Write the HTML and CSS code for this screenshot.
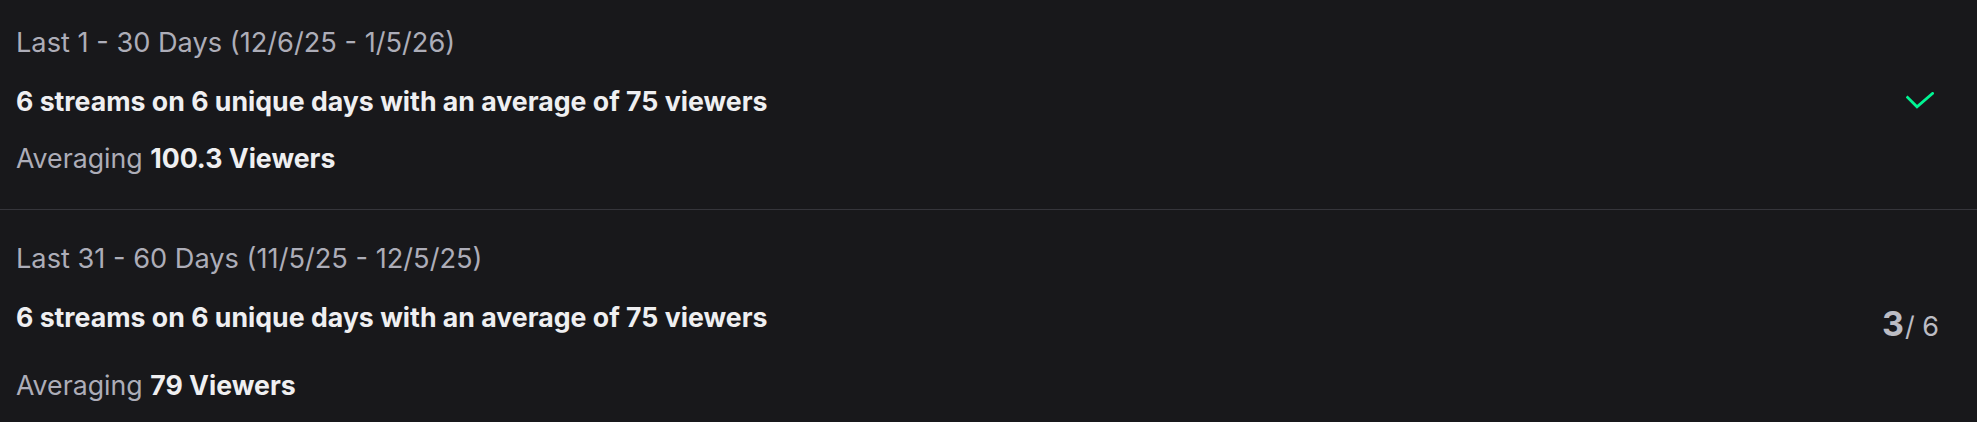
FILE: index.html
```html
<!DOCTYPE html>
<html lang="en">
<head>
<meta charset="utf-8">
<title>Stream goals</title>
<link rel="stylesheet" href="styles.css">
</head>
<body>
<div class="list">
  <section class="period period-first">
    <div class="range">Last 1 - 30 Days (12/6/25 - 1/5/26)</div>
    <div class="row">
      <div class="summary">6 streams on 6 unique days with an average of 75 viewers</div>
      <svg class="check" width="28" height="18" viewBox="0 0 28 18" aria-hidden="true"><polyline points="1.6,5.4 11,14.8 26.6,1.4" fill="none" stroke="#00f593" stroke-width="2.8" stroke-linecap="square"/></svg>
    </div>
    <div class="avg">Averaging <strong>100.3 Viewers</strong></div>
  </section>
  <section class="period">
    <div class="range">Last 31 - 60 Days (11/5/25 - 12/5/25)</div>
    <div class="row">
      <div class="summary">6 streams on 6 unique days with an average of 75 viewers</div>
      <div class="ratio"><span class="ratio-num">3</span><span class="ratio-den">/ 6</span></div>
    </div>
    <div class="avg">Averaging <strong>79 Viewers</strong></div>
  </section>
</div>
</body>
</html>
```
FILE: styles.css
```css
html, body {
  margin: 0;
  padding: 0;
  background: #18181b;
}
body {
  font-family: Inter, "Liberation Sans", sans-serif;
  font-size: 26.7px;
  line-height: 36px;
  color: #efeff1;
  overflow: hidden;
}
.list {
  display: flex;
  flex-direction: column;
}
.period {
  display: flex;
  flex-direction: column;
  gap: 21.5px;
  padding: 31.3px 38px 33px 16px;
  border-top: 1px solid #35353b;
}
.period-first {
  padding-top: 25px;
  border-top: none;
}
.range {
  color: #adadb8;
  font-weight: 400;
  font-size: 27.2px;
}
.row {
  display: flex;
  align-items: flex-start;
  justify-content: space-between;
}
.summary {
  font-weight: 700;
  color: #efeff1;
}
.check {
  align-self: center;
  margin-right: 5px;
  display: block;
}
.ratio {
  margin-top: 6px;
  font-size: 34px;
  line-height: 38px;
  color: #bcbcc4;
  white-space: nowrap;
}
.ratio-num {
  font-weight: 700;
}
.ratio-den {
  font-size: 27px;
  font-weight: 400;
  margin-left: 1px;
}
.avg {
  color: #adadb8;
}
.avg strong {
  color: #efeff1;
  font-weight: 700;
}
```
